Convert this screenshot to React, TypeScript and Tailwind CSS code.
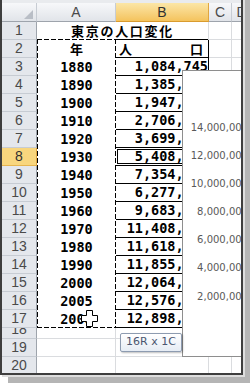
import React from "react";

const years = ["1880", "1890", "1900", "1910", "1920", "1930", "1940", "1950", "1960", "1970", "1980", "1990", "2000", "2005", "2008"];
const pops = [
  "1,084,745", "1,385,224", "1,947,437", "2,706,052", "3,699,428", "5,408,678", "7,354,971", "6,277,500",
  "9,683,802", "11,408,071", "11,618,281", "11,855,563", "12,064,101", "12,576,601", "12,898,453",
];
const ticks = ["14,000,000", "12,000,000", "10,000,000", "8,000,000", "6,000,000", "4,000,000", "2,000,000"];

const grid = "shrink-0 border-r border-b border-[#dadcdf]";
const cellFont = "font-['DejaVu_Sans_Mono',monospace] font-bold text-[13.5px] text-black";
const cjk = "font-['Noto_Sans_CJK_JP',sans-serif] font-bold text-[13px] text-black";

function RowHead({ n, active }: { n: number; active?: boolean }) {
  return (
    <div
      className={
        active
          ? "flex w-[35px] shrink-0 items-center justify-center border-r border-b border-r-[#e0a640] border-b-[#e6b54f] bg-[#f8d67e] font-['Liberation_Sans',sans-serif] text-[14px] text-[#303030]"
          : "flex w-[35px] shrink-0 items-center justify-center border-r border-b border-r-[#9ea4ac] border-b-[#c7ccd3] bg-[#e4e7ec] font-['Liberation_Sans',sans-serif] text-[14px] text-[#4a4a4a]"
      }
    >
      {n}
    </div>
  );
}

function ColHead({ label, w, active }: { label: string; w: string; active?: boolean }) {
  return (
    <div
      className={`${w} flex shrink-0 items-center justify-center border-r border-b font-['Liberation_Sans',sans-serif] text-[14px] ${
        active
          ? "border-r-[#e0a640] border-b-[#d99b2e] bg-linear-to-b from-[#fbe6a6] to-[#f4c35c] text-[#303030]"
          : "border-r-[#c7ccd3] border-b-[#9ea4ac] bg-linear-to-b from-[#f7f8fa] to-[#e1e4e9] text-[#4a4a4a]"
      }`}
    >
      {label}
    </div>
  );
}

export default function App() {
  return (
    <div className="h-[384px] w-[250px] overflow-hidden bg-white">
      <div className="-mt-[8px] h-[383px] w-[243px] overflow-hidden border-r-2 border-b-2 border-l-2 border-[#3e3e3e] bg-white shadow-[2px_2px_0_#dedede,8px_8px_0_#b5b5b5]">
        <div className="h-[11px] bg-[#e9ebee]" />
        <div className="relative">
          {/* column headers */}
          <div className="flex h-[19px]">
            <div className="flex w-[35px] shrink-0 items-end justify-end border-r border-b border-r-[#c7ccd3] border-b-[#9ea4ac] bg-linear-to-b from-[#f7f8fa] to-[#e1e4e9] pr-[3px] pb-[2px]">
              <svg width="9" height="9" viewBox="0 0 9 9">
                <polygon points="9,0 9,9 0,9" fill="#b9bec6" />
              </svg>
            </div>
            <ColHead label="A" w="w-[79px]" />
            <ColHead label="B" w="w-[93px]" active />
            <ColHead label="C" w="w-[23px]" />
            <ColHead label="D" w="w-[20px]" />
          </div>

          {/* row 1 */}
          <div className="flex h-[18px]">
            <RowHead n={1} />
            <div className="flex w-[172px] shrink-0 flex-col border-r border-[#dadcdf]">
              <div className={`flex h-[17px] items-center justify-center tracking-[1.7px] ${cjk}`}>東京の人口変化</div>
              <div className="flex h-[1px]">
                <div className="w-[79px]" />
                <div className="w-[92px] bg-black" />
              </div>
            </div>
            <div className={`w-[23px] ${grid}`} />
            <div className={`w-[20px] ${grid}`} />
          </div>

          {/* row 2 */}
          <div className="flex h-[18px]">
            <RowHead n={2} />
            <div className={`flex w-[79px] shrink-0 items-center justify-center ${cjk}`}>年</div>
            <div className={`flex w-[93px] shrink-0 items-center justify-between border-r border-b border-black pl-[3px] pr-[5px] ${cjk}`}>
              <span>人</span>
              <span>口</span>
            </div>
            <div className={`w-[23px] ${grid}`} />
            <div className={`w-[20px] ${grid}`} />
          </div>

          {years.map((y, i) => (
            <div key={y} className="flex h-[18px]">
              <RowHead n={i + 3} active={i + 3 === 8} />
              <div className={`flex w-[79px] shrink-0 items-center justify-center ${cellFont}`}>{y}</div>
              <div className={`flex w-[93px] shrink-0 items-center justify-end overflow-hidden border-r border-b border-black ${cellFont}`}>
                {pops[i]}
              </div>
              <div className={`w-[23px] ${grid}`} />
              <div className={`w-[20px] ${grid}`} />
            </div>
          ))}

          {/* row 18, mostly hidden */}
          <div className="flex h-[11px]">
            <div className="flex w-[35px] shrink-0 items-end justify-center overflow-hidden border-r border-b border-r-[#9ea4ac] border-b-[#c7ccd3] bg-[#e4e7ec] font-['Liberation_Sans',sans-serif] text-[14px] text-[#4a4a4a]">
              <div className="flex h-[18px] shrink-0 items-center">18</div>
            </div>
            <div className={`w-[79px] ${grid}`} />
            <div className={`w-[93px] ${grid}`} />
            <div className={`w-[23px] ${grid}`} />
            <div className={`w-[20px] ${grid}`} />
          </div>

          {[19, 20].map((n) => (
            <div key={n} className="flex h-[18px]">
              <RowHead n={n} />
              <div className={`w-[79px] ${grid}`} />
              <div className={`w-[93px] ${grid}`} />
              <div className={`w-[23px] ${grid}`} />
              <div className={`w-[20px] ${grid}`} />
            </div>
          ))}

          {/* copy marquee around A2:A17 */}
          <div className="absolute left-[35px] top-[36px] h-[289px] w-[79px]">
            <div className="absolute left-0 top-0 h-[1px] w-full bg-[image:repeating-linear-gradient(to_right,#000_0_5px,transparent_5px_7px)]" />
            <div className="absolute bottom-0 left-0 h-[1px] w-full bg-[image:repeating-linear-gradient(to_right,#000_0_5px,transparent_5px_7px)]" />
            <div className="absolute left-0 top-0 h-full w-[1px] bg-[image:repeating-linear-gradient(to_bottom,#000_0_5px,transparent_5px_7px)]" />
            <div className="absolute right-0 top-0 h-full w-[1px] bg-[image:repeating-linear-gradient(to_bottom,#000_0_5px,transparent_5px_7px)]" />
          </div>

          {/* active cell B8 */}
          <div className="absolute left-[115px] top-[146px] h-[15px] w-[95px] border border-black" />

          {/* chart */}
          <div className="absolute left-[180px] top-[67px] h-[287px] w-[80px] border border-[#8e8e8e] bg-white">
            <div className="flex w-[65px] flex-col pt-[42px] font-['DejaVu_Sans',sans-serif] text-[10px] text-[#595959]">
              {ticks.map((t) => (
                <div key={t} className="flex h-[28.17px] items-center justify-end">
                  {t}
                </div>
              ))}
            </div>
          </div>

          {/* fill handle cursor */}
          <svg className="absolute left-[79px] top-[307px]" width="17" height="17" viewBox="0 0 17 17">
            <polygon
              points="5.5,0.5 11.5,0.5 11.5,5.5 16.5,5.5 16.5,11.5 11.5,11.5 11.5,16.5 5.5,16.5 5.5,11.5 0.5,11.5 0.5,5.5 5.5,5.5"
              fill="white"
              stroke="black"
              strokeWidth="1"
            />
          </svg>

          {/* selection size tooltip */}
          <div className="absolute left-[118px] top-[330px] flex h-[19px] w-[62px] items-center justify-center rounded-[2px] border border-[#8d9bb0] bg-linear-to-b from-white to-[#e6ecf4] font-['DejaVu_Sans',sans-serif] text-[11px] text-[#4b5670] shadow-[1px_1px_2px_rgba(0,0,0,0.25)]">
            16R x 1C
          </div>
        </div>
      </div>
    </div>
  );
}
